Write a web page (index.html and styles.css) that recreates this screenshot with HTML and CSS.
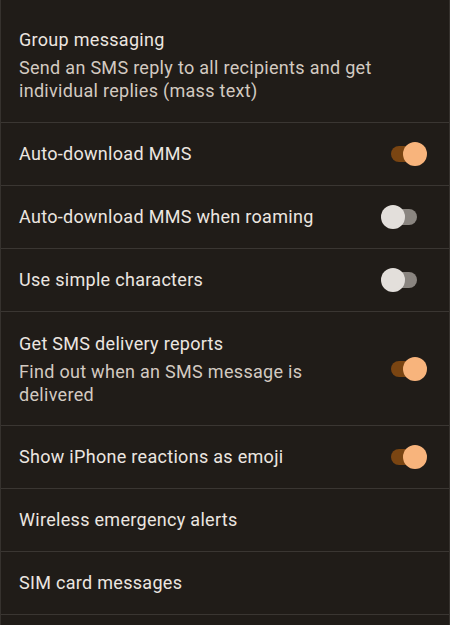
FILE: index.html
```html
<!DOCTYPE html>
<html>
  <head>
    <title>Advanced</title>
    <link rel="stylesheet" href="styles.css">
  </head>
  <body>
    <div class="settings-list">
      <div class="setting first">
        <div class="setting-text">
          <div class="setting-title">Group messaging</div>
          <div class="setting-summary">Send an SMS reply to all recipients and get individual replies (mass text)</div>
        </div>
      </div>
      <div class="setting">
        <div class="setting-text">
          <div class="setting-title">Auto-download MMS</div>
        </div>
        <div class="switch on"><span class="track"></span><span class="thumb"></span></div>
      </div>
      <div class="setting">
        <div class="setting-text">
          <div class="setting-title">Auto-download MMS when roaming</div>
        </div>
        <div class="switch"><span class="track"></span><span class="thumb"></span></div>
      </div>
      <div class="setting">
        <div class="setting-text">
          <div class="setting-title">Use simple characters</div>
        </div>
        <div class="switch"><span class="track"></span><span class="thumb"></span></div>
      </div>
      <div class="setting two-line">
        <div class="setting-text">
          <div class="setting-title">Get SMS delivery reports</div>
          <div class="setting-summary">Find out when an SMS message is delivered</div>
        </div>
        <div class="switch on"><span class="track"></span><span class="thumb"></span></div>
      </div>
      <div class="setting">
        <div class="setting-text">
          <div class="setting-title">Show iPhone reactions as emoji</div>
        </div>
        <div class="switch on"><span class="track"></span><span class="thumb"></span></div>
      </div>
      <div class="setting">
        <div class="setting-text">
          <div class="setting-title">Wireless emergency alerts</div>
        </div>
      </div>
      <div class="setting">
        <div class="setting-text">
          <div class="setting-title">SIM card messages</div>
        </div>
      </div>
    </div>
  </body>
</html>
```

FILE: styles.css
```css
body {
  margin: 0;
  background-color: #201c18;
  font-family: Roboto, "Noto Sans", sans-serif;
}
.settings-list {
  min-height: 625px;
  border-left: 1px solid #36322e;
  border-right: 1px solid #36322e;
}
.setting {
  display: flex;
  align-items: center;
  min-height: 63px;
  padding: 0 22px 0 18px;
  border-bottom: 1px solid #3a3632;
  box-sizing: border-box;
}
.setting.first {
  height: 123px;
  padding-top: 8px;
}
.setting.two-line {
  height: 114px;
}
.setting-text {
  flex: 1;
}
.setting-title {
  color: #ece6e0;
  font-size: 18px;
  line-height: 24px;
  letter-spacing: 0.3px;
}
.setting-summary {
  color: #d3cac1;
  font-size: 18px;
  line-height: 23px;
  letter-spacing: 0.3px;
  margin-top: 4px;
  max-width: 362px;
}
.switch {
  position: relative;
  width: 46px;
  height: 24px;
  flex-shrink: 0;
}
.switch .track {
  position: absolute;
  left: 10px;
  top: 4px;
  width: 26px;
  height: 16px;
  border-radius: 8px;
  background-color: #8a8580;
}
.switch .thumb {
  position: absolute;
  left: 0;
  top: 0;
  width: 24px;
  height: 24px;
  border-radius: 50%;
  background-color: #e3dfdb;
}
.switch.on .track {
  background-color: #7a4512;
}
.switch.on .thumb {
  left: 22px;
  background-color: #f8b47c;
}
```
